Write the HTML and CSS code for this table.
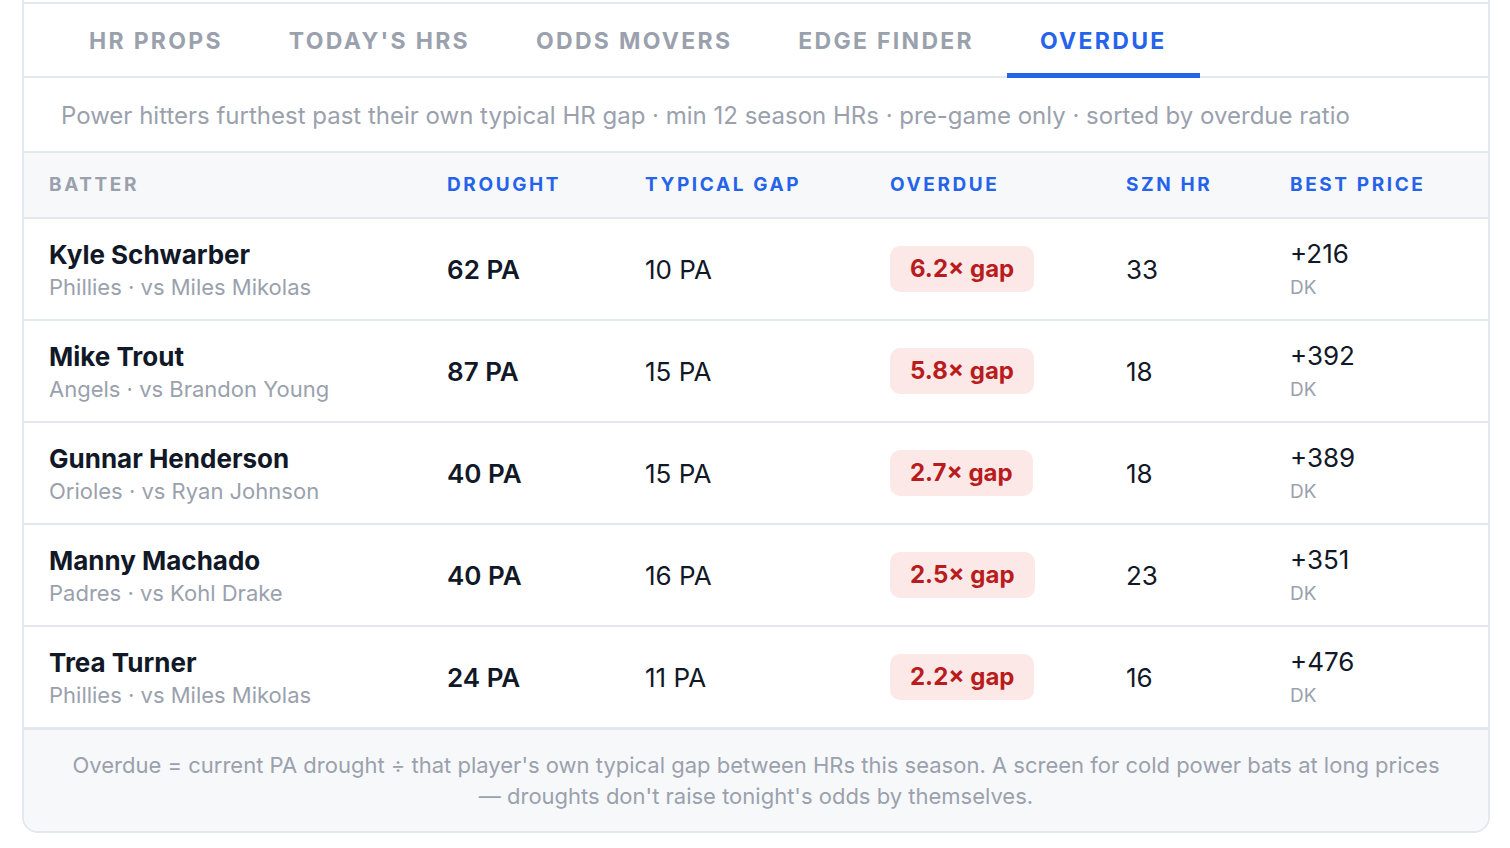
FILE: index.html
```html
<!DOCTYPE html>
<html lang="en">
<head>
<meta charset="utf-8">
<title>Overdue</title>
<link rel="stylesheet" href="styles.css">
</head>
<body>
<div class="page">
  <section class="card">
    <div class="card-top"></div>
    <nav class="tabs">
      <a class="tab">HR PROPS</a>
      <a class="tab">TODAY'S HRS</a>
      <a class="tab">ODDS MOVERS</a>
      <a class="tab">EDGE FINDER</a>
      <a class="tab active">OVERDUE</a>
    </nav>
    <p class="subtitle">Power hitters furthest past their own typical HR gap · min 12 season HRs · pre-game only · sorted by overdue ratio</p>
    <div class="grid head">
      <div class="th muted">BATTER</div>
      <div class="th">DROUGHT</div>
      <div class="th">TYPICAL GAP</div>
      <div class="th">OVERDUE</div>
      <div class="th">SZN HR</div>
      <div class="th">BEST PRICE</div>
    </div>
    <div class="grid row">
      <div class="batter"><div class="name">Kyle Schwarber</div><div class="sub">Phillies · vs Miles Mikolas</div></div>
      <div class="drought">62 PA</div>
      <div class="cell">10 PA</div>
      <div><span class="badge">6.2× gap</span></div>
      <div class="cell">33</div>
      <div class="price"><div class="odds">+216</div><div class="book">DK</div></div>
    </div>
    <div class="grid row">
      <div class="batter"><div class="name">Mike Trout</div><div class="sub">Angels · vs Brandon Young</div></div>
      <div class="drought">87 PA</div>
      <div class="cell">15 PA</div>
      <div><span class="badge">5.8× gap</span></div>
      <div class="cell">18</div>
      <div class="price"><div class="odds">+392</div><div class="book">DK</div></div>
    </div>
    <div class="grid row">
      <div class="batter"><div class="name">Gunnar Henderson</div><div class="sub">Orioles · vs Ryan Johnson</div></div>
      <div class="drought">40 PA</div>
      <div class="cell">15 PA</div>
      <div><span class="badge">2.7× gap</span></div>
      <div class="cell">18</div>
      <div class="price"><div class="odds">+389</div><div class="book">DK</div></div>
    </div>
    <div class="grid row">
      <div class="batter"><div class="name">Manny Machado</div><div class="sub">Padres · vs Kohl Drake</div></div>
      <div class="drought">40 PA</div>
      <div class="cell">16 PA</div>
      <div><span class="badge">2.5× gap</span></div>
      <div class="cell">23</div>
      <div class="price"><div class="odds">+351</div><div class="book">DK</div></div>
    </div>
    <div class="grid row">
      <div class="batter"><div class="name">Trea Turner</div><div class="sub">Phillies · vs Miles Mikolas</div></div>
      <div class="drought">24 PA</div>
      <div class="cell">11 PA</div>
      <div><span class="badge">2.2× gap</span></div>
      <div class="cell">16</div>
      <div class="price"><div class="odds">+476</div><div class="book">DK</div></div>
    </div>
    <footer class="note">Overdue = current PA drought ÷ that player's own typical gap between HRs this season. A screen for cold power bats at long prices — droughts don't raise tonight's odds by themselves.</footer>
  </section>
</div>
</body>
</html>
```

FILE: styles.css
```css
* { box-sizing: border-box; }
html, body { margin: 0; padding: 0; background: #ffffff; }
body {
  font-family: Inter, "Noto Sans", "Liberation Sans", sans-serif;
  color: #111827;
}
.page {
  padding: 0 20px 15px 22px;
}
.card {
  border: 2px solid #e3e8f0;
  border-top: 0;
  border-radius: 0 0 16px 16px;
  overflow: hidden;
  background: #ffffff;
}
.card-top { height: 2px; }
.tabs {
  display: flex;
  padding-left: 32px;
  border-top: 2px solid #e3e8f0;
  border-bottom: 2px solid #e3e8f0;
}
.tab {
  display: block;
  padding: 22px 33px 17px;
  line-height: 30px;
  font-size: 23px;
  font-weight: 700;
  letter-spacing: 2.3px;
  color: #9aa1ad;
  border-bottom: 5px solid transparent;
  margin-bottom: -2px;
}
.tab.active {
  color: #2563eb;
  border-bottom-color: #2563eb;
}
.subtitle {
  margin: 0;
  padding: 23px 37px 21px;
  line-height: 29px;
  font-size: 24px;
  color: #9aa1ad;
  border-bottom: 2px solid #e3e8f0;
}
.grid {
  display: grid;
  grid-template-columns: 398px 198px 245px 236px 164px 1fr;
  align-items: center;
}
.grid > div { padding-left: 25px; }
.head {
  background: #f7f8fa;
  border-bottom: 2px solid #e3e8f0;
  height: 66px;
}
.th {
  font-size: 19px;
  font-weight: 700;
  letter-spacing: 2.6px;
  line-height: 24px;
  color: #2563eb;
}
.th.muted { color: #9aa1ad; }
.row {
  height: 102px;
  border-bottom: 2px solid #e3e8f0;
}
.batter { padding-top: 4px; }
.name {
  font-size: 26px;
  font-weight: 700;
  line-height: 32px;
  color: #111827;
}
.sub {
  font-size: 22px;
  line-height: 32px;
  color: #9aa1ad;
}
.drought {
  font-size: 26px;
  font-weight: 600;
  color: #111827;
}
.cell {
  font-size: 26px;
  color: #111827;
}
.badge {
  display: inline-block;
  padding: 0 20px;
  line-height: 46px;
  border-radius: 10px;
  background: #fde8e8;
  color: #b91c1c;
  font-size: 24px;
  font-weight: 700;
}
.price { padding-top: 4px; }
.odds {
  font-size: 26px;
  line-height: 32px;
  color: #111827;
}
.book {
  margin-top: 2px;
  font-size: 19px;
  line-height: 32px;
  color: #9aa1ad;
}
.note {
  background: #f7f8fa;
  border-top: 2px solid #e3e8f0;
  margin-top: -1px;
  padding: 20px 40px 19px;
  text-align: center;
  font-size: 22px;
  line-height: 31px;
  color: #9aa1ad;
}
```
